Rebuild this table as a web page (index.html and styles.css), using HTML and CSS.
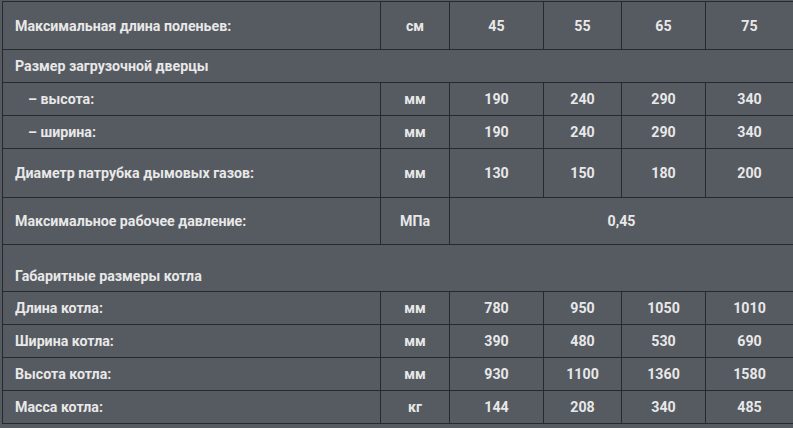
FILE: index.html
```html
<!DOCTYPE html>
<html lang="ru">
<head>
<meta charset="utf-8">
<link rel="stylesheet" href="styles.css">
</head>
<body>
<div class="wrap">
<table class="spec">
  <colgroup>
    <col class="c-label"><col class="c-unit"><col class="c-v1"><col class="c-v2"><col class="c-v3"><col class="c-v4">
  </colgroup>
  <tbody>
    <tr class="r-tall">
      <td class="label">Максимальная длина поленьев:</td>
      <td>см</td><td class="num">45</td><td class="num">55</td><td class="num">65</td><td class="num">75</td>
    </tr>
    <tr class="r-short">
      <td class="label" colspan="6">Размер загрузочной дверцы</td>
    </tr>
    <tr class="r-short">
      <td class="label sub">– высота:</td>
      <td>мм</td><td class="num">190</td><td class="num">240</td><td class="num">290</td><td class="num">340</td>
    </tr>
    <tr class="r-short">
      <td class="label sub">– ширина:</td>
      <td>мм</td><td class="num">190</td><td class="num">240</td><td class="num">290</td><td class="num">340</td>
    </tr>
    <tr class="r-taller">
      <td class="label">Диаметр патрубка дымовых газов:</td>
      <td>мм</td><td class="num">130</td><td class="num">150</td><td class="num">180</td><td class="num">200</td>
    </tr>
    <tr class="r-mid">
      <td class="label">Максимальное рабочее давление:</td>
      <td>МПа</td><td class="num" colspan="4">0,45</td>
    </tr>
    <tr class="r-mid">
      <td class="label group" colspan="6">Габаритные размеры котла</td>
    </tr>
    <tr class="r-short">
      <td class="label">Длина котла:</td>
      <td>мм</td><td class="num">780</td><td class="num">950</td><td class="num">1050</td><td class="num">1010</td>
    </tr>
    <tr class="r-short">
      <td class="label">Ширина котла:</td>
      <td>мм</td><td class="num">390</td><td class="num">480</td><td class="num">530</td><td class="num">690</td>
    </tr>
    <tr class="r-short">
      <td class="label">Высота котла:</td>
      <td>мм</td><td class="num">930</td><td class="num">1100</td><td class="num">1360</td><td class="num">1580</td>
    </tr>
    <tr class="r-short">
      <td class="label">Масса котла:</td>
      <td>кг</td><td class="num">144</td><td class="num">208</td><td class="num">340</td><td class="num">485</td>
    </tr>
  </tbody>
</table>
</div>
</body>
</html>
```

FILE: styles.css
```css
html, body {
  margin: 0;
  background: #565a61;
}
.wrap {
  padding: 1px 0 0 2px;
}
.spec {
  border-collapse: collapse;
  table-layout: fixed;
  width: 791px;
  font-family: Roboto, "Liberation Sans", sans-serif;
  font-weight: 700;
  font-size: 14.2px;
  color: #e8e8e8;
}
.c-label { width: 378px; }
.c-unit { width: 69px; }
.c-v1 { width: 94px; }
.c-v2 { width: 78px; }
.c-v3 { width: 84px; }
.c-v4 { width: 88px; }
.spec td {
  border: 1px solid #26292d;
  padding: 0;
  text-align: center;
  vertical-align: middle;
  line-height: 18px;
}
.spec td.label {
  text-align: left;
  padding-left: 12px;
}
.spec td.sub {
  padding-left: 25px;
}
.r-tall td { height: 47px; }
.r-taller td { height: 48px; }
.r-mid td { height: 46px; }
.r-short td { height: 32px; }
.spec td.group {
  vertical-align: bottom;
  padding-bottom: 6px;
  height: 40px;
}
```
